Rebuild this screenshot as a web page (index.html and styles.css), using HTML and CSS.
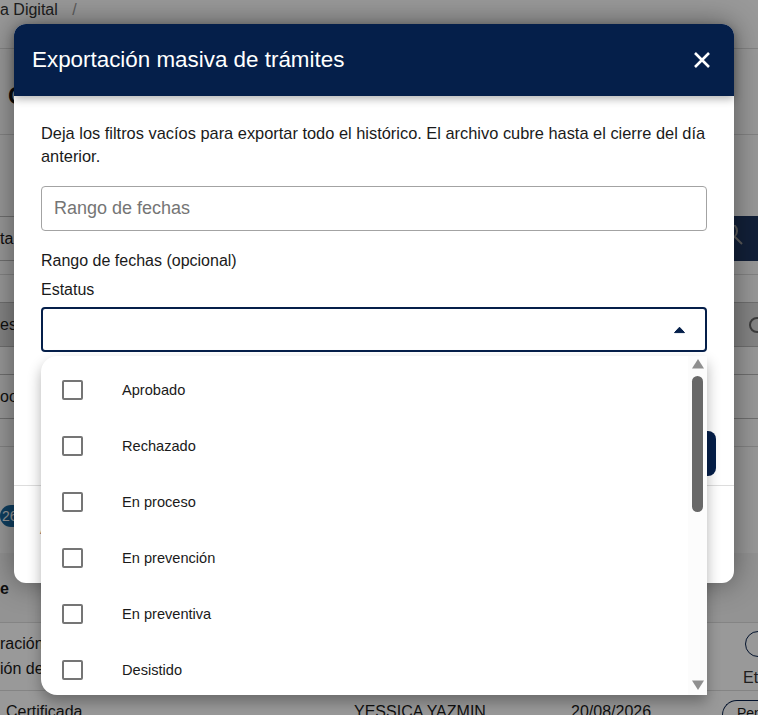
FILE: index.html
```html
<!DOCTYPE html>
<html lang="es">
<head>
    <meta charset="UTF-8">
    <meta name="viewport" content="width=device-width, initial-scale=1.0">
    <title>Exportación masiva de trámites</title>
    <link rel="stylesheet" href="styles.css">
</head>
<body>
    <div class="page">
        <div class="crumb">a Digital <span class="crumb-sep">/</span></div>
        <div class="page-title">C</div>
        <div class="search-row">
            <span>ta</span>
            <button class="search-btn">
                <svg width="24" height="24" viewBox="0 0 24 24" fill="none" stroke="#9a9a9a" stroke-width="2"><circle cx="-5" cy="6" r="8"/><path d="M1 12l7 7"/></svg>
            </button>
        </div>
        <div class="filters">
            <div class="filter-field grey">
                <span>es</span>
                <svg width="20" height="20" viewBox="0 0 20 20" fill="none" stroke="#666" stroke-width="2"><circle cx="9" cy="10" r="7"/></svg>
            </div>
            <div class="filter-field">oo</div>
        </div>
        <div class="chips-row"><span class="chip">26</span></div>
        <div class="table-head">e</div>
        <div class="table-row tall">
            <div>ración<br>ión de</div>
            <div class="row-action">
                <span class="round-btn"></span>
                <span class="row-label">Et</span>
            </div>
        </div>
        <div class="table-row">
            <span class="cell-status">Certificada</span>
            <span class="cell-name">YESSICA YAZMIN</span>
            <span class="cell-date">20/08/2026</span>
            <span class="pill">Pendiente</span>
        </div>
    </div>

    <div class="overlay"></div>

    <div class="modal">
        <div class="modal-header">
            <h2>Exportación masiva de trámites</h2>
            <svg width="16" height="16" viewBox="0 0 16 16" stroke="#fff" stroke-width="2.6" fill="none"><path d="M1 1l14 14M15 1L1 15"/></svg>
        </div>
        <div class="modal-body">
            <p class="hint">Deja los filtros vacíos para exportar todo el histórico. El archivo cubre hasta el cierre del día anterior.</p>
            <input class="date-input" type="text" placeholder="Rango de fechas">
            <div class="field-label first">Rango de fechas (opcional)</div>
            <div class="field-label">Estatus</div>
            <div class="select-box">
                <svg width="13" height="8" viewBox="0 0 13 8" fill="#051f4a" stroke="#051f4a" stroke-width="1" stroke-linejoin="round"><path d="M6.5 1.200L11.500 6.600H1.500z"/></svg>
            </div>
            <div class="actions"><button class="export-btn">Exportar</button></div>
        </div>
        <div class="modal-footer">Archivo</div>

        <div class="dropdown">
            <ul class="options">
                <li><input type="checkbox"><span>Aprobado</span></li>
                <li><input type="checkbox"><span>Rechazado</span></li>
                <li><input type="checkbox"><span>En proceso</span></li>
                <li><input type="checkbox"><span>En prevención</span></li>
                <li><input type="checkbox"><span>En preventiva</span></li>
                <li><input type="checkbox"><span>Desistido</span></li>
            </ul>
            <div class="scrollbar">
                <svg width="14" height="10" viewBox="0 0 14 10" fill="#8f8f8f"><path d="M7 0l6 9.500H1z"/></svg>
                <div class="thumb"></div>
                <svg class="arrow-down" width="14" height="10" viewBox="0 0 14 10" fill="#8f8f8f"><path d="M1 0.500h12L7 10z"/></svg>
            </div>
        </div>
    </div>
</body>
</html>
```

FILE: styles.css
```css
* {
    box-sizing: border-box;
}
html, body {
    margin: 0;
    height: 715px;
    overflow: hidden;
}
body {
    font-family: "Liberation Sans", Arial, sans-serif;
    background-color: white;
    color: #1a1a1a;
    position: relative;
}

/* page behind the modal */
.page {
    height: 715px;
    overflow: hidden;
    font-size: 16px;
}
.crumb {
    height: 49px;
    line-height: 20px;
    border-bottom: 1px solid #ddd;
    color: #333;
}
.crumb-sep {
    margin-left: 10px;
    color: #999;
}
.page-title {
    height: 86px;
    padding: 33px 0 0 8px;
    font-size: 24px;
    font-weight: bold;
    color: #111;
    border-bottom: 1px solid #ddd;
}
.search-row {
    display: flex;
    justify-content: space-between;
    align-items: center;
    height: 45px;
    margin: 81px 0 13px;
    border-top: 1px solid #bbb;
    border-bottom: 1px solid #bbb;
}
.search-btn {
    width: 24px;
    height: 45px;
    padding: 0;
    border: 0;
    background-color: #1f365f;
    overflow: hidden;
}
.filters {
    display: flex;
    flex-direction: column;
    gap: 27px;
    height: 173px;
    padding-top: 27px;
    border-top: 1px solid #ddd;
    border-bottom: 1px solid #ddd;
}
.filter-field {
    display: flex;
    justify-content: space-between;
    align-items: center;
    height: 45px;
    border-top: 1px solid #bbb;
    border-bottom: 1px solid #bbb;
}
.filter-field.grey {
    background-color: #dedede;
}
.filter-field svg {
    margin-right: -10px;
}
.chips-row {
    height: 106px;
    padding-top: 58px;
}
.chip {
    display: inline-block;
    height: 22px;
    padding: 0 12px 0 2px;
    line-height: 22px;
    border-radius: 11px;
    background-color: #1a6aa2;
    color: white;
    font-size: 14px;
}
.table-head {
    height: 70px;
    padding-top: 27px;
    font-weight: bold;
    background-color: #f6f6f6;
    border-bottom: 1px solid #ddd;
}
.table-row {
    display: flex;
    justify-content: space-between;
    height: 40px;
    padding-top: 12px;
    white-space: nowrap;
}
.table-row.tall {
    height: 68px;
    padding-top: 8px;
    line-height: 25px;
    border-bottom: 1px solid #ddd;
}
.row-action {
    width: 15px;
    display: flex;
    flex-direction: column;
    gap: 12px;
    line-height: 18px;
}
.round-btn {
    width: 28px;
    height: 26px;
    flex-shrink: 0;
    margin-left: 2px;
    border: 1px solid #051f4a;
    border-radius: 13px;
}
.row-label {
    color: #333;
}
.cell-status {
    width: 354px;
    padding-left: 6px;
}
.cell-name {
    width: 217px;
}
.cell-date {
    width: 151px;
}
.pill {
    flex: 1;
    margin-top: -3px;
    height: 30px;
    padding: 4px 0 0 14px;
    font-size: 14px;
    border: 1px solid #051f4a;
    border-right: 0;
    border-radius: 15px 0 0 15px;
    overflow: hidden;
}

.overlay {
    position: absolute;
    inset: 0;
    background-color: rgba(0, 0, 0, 0.4);
}

/* modal */
.modal {
    position: absolute;
    left: 14px;
    top: 24px;
    width: 720px;
    height: 559px;
    border-radius: 12px;
    background-color: white;
    box-shadow: 0 0 30px rgba(0, 0, 0, 0.45);
}
.modal-header {
    position: relative;
    z-index: 1;
    display: flex;
    justify-content: space-between;
    align-items: center;
    height: 72px;
    padding: 0 24px 0 18px;
    border-radius: 12px 12px 0 0;
    background-color: #051f4a;
    box-shadow: 0 3px 8px rgba(0, 0, 0, 0.3);
}
.modal-header h2 {
    margin: 0;
    font-size: 22.4px;
    font-weight: normal;
    color: white;
}
.modal-body {
    height: 390px;
    padding: 26px 27px 0;
    border-bottom: 1px solid #ddd;
}
.hint {
    margin: 0 0 18px;
    font-size: 16.4px;
    line-height: 23px;
}
.date-input {
    display: block;
    width: 100%;
    height: 45px;
    padding: 0 12px;
    font-family: inherit;
    font-size: 18px;
    border: 1px solid #a3a3a3;
    border-radius: 4px;
}
.date-input::placeholder {
    color: #757575;
}
.field-label {
    font-size: 16px;
    line-height: 18px;
    margin-top: 11px;
}
.field-label.first {
    margin-top: 21px;
}
.select-box {
    display: flex;
    justify-content: flex-end;
    align-items: center;
    height: 45px;
    margin-top: 8px;
    padding-right: 19px;
    border: 2px solid #051f4a;
    border-radius: 4px;
}
.actions {
    display: flex;
    justify-content: flex-end;
    margin: 79px -9px 0 0;
}
.export-btn {
    width: 200px;
    height: 45px;
    border: 0;
    border-radius: 8px;
    background-color: #051f4a;
    color: white;
}
.modal-footer {
    padding: 34px 0 0 26px;
    font-size: 16px;
    color: #777;
}

/* status dropdown */
.dropdown {
    position: absolute;
    z-index: 2;
    left: 27px;
    top: 332px;
    width: 666px;
    height: 339px;
    display: flex;
    overflow: hidden;
    border-radius: 16px 0 0 16px;
    background-color: white;
    box-shadow: 0 7px 14px rgba(0, 0, 0, 0.3);
}
.options {
    flex: 1;
    margin: 0;
    padding: 6px 0 0;
    list-style: none;
}
.options li {
    display: flex;
    align-items: center;
    height: 56px;
    padding-left: 21px;
    font-size: 14.6px;
}
.options input {
    appearance: none;
    width: 21px;
    height: 20px;
    margin: 0 39px 0 0;
    border: 2px solid #757575;
    border-radius: 2px;
}
.scrollbar {
    display: flex;
    flex-direction: column;
    align-items: center;
    width: 19px;
    padding-top: 3px;
    background-color: #fcfcfc;
}
.thumb {
    width: 11px;
    height: 136px;
    margin-top: 7px;
    border-radius: 6px;
    background-color: #686868;
}
.arrow-down {
    margin-top: auto;
    margin-bottom: 5px;
}
```
